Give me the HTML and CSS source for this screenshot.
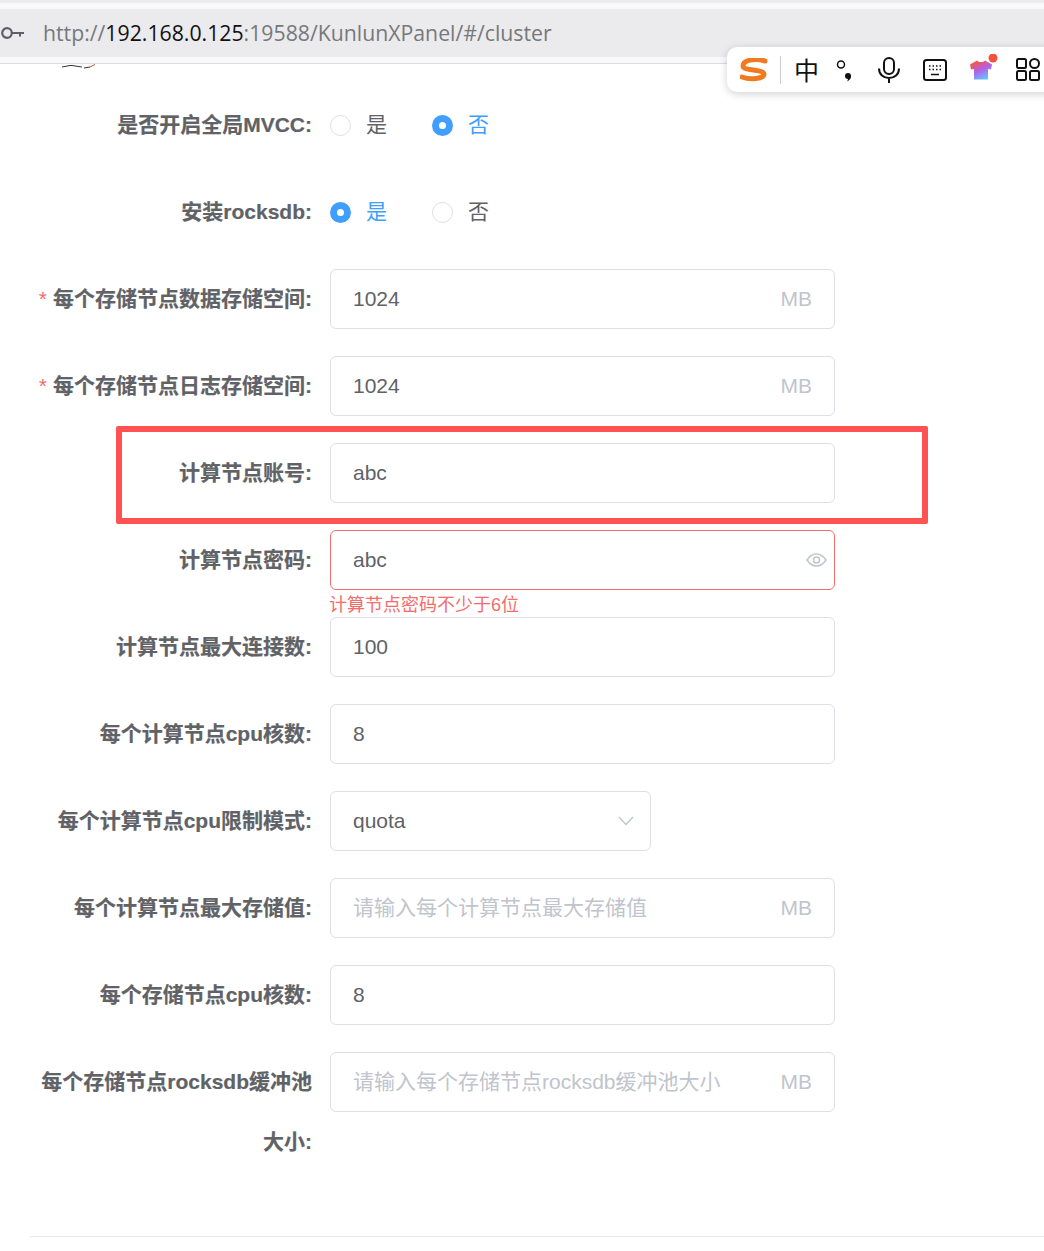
FILE: index.html
```html
<!DOCTYPE html>
<html lang="en">
<head>
    <meta charset="UTF-8">
    <title>KunlunXPanel</title>
    <link rel="stylesheet" href="styles.css">
</head>
<body>
    <div class="browser-bar">
        <div class="address">
            <svg class="key-icon" width="24" height="14" viewBox="0 0 24 14">
                <circle cx="7" cy="7" r="4.800" fill="none" stroke="#5f6063" stroke-width="2.200"/>
                <path d="M12 7H24M20 7V10.500" fill="none" stroke="#5f6063" stroke-width="2"/>
            </svg>
            <span class="url">http://<b>192.168.0.125</b>:19588/KunlunXPanel/#/cluster</span>
        </div>
    </div>

    <div class="ime-bar">
        <svg class="ime-logo" width="28" height="24" viewBox="0 0 28 24">
            <path d="M25 3C15 0 3 2 3 8C3 13 23 11 24 16C24 21 10 22 2 19" fill="none" stroke="#f07a1f" stroke-width="5" stroke-linecap="round"/>
        </svg>
        <span class="ime-divider"></span>
        <span class="ime-zh">中</span>
        <svg class="ime-punct" width="20" height="24" viewBox="0 0 20 24">
            <circle cx="5" cy="6.500" r="3.500" fill="none" stroke="#111" stroke-width="1.500"/>
            <circle cx="12" cy="18" r="3" fill="#111"/>
            <path d="M15 18C15 20.500 13.500 22.500 11 23.500C12 22 12 21 12 20Z" fill="#111"/>
        </svg>
        <svg class="ime-mic" width="22" height="26" viewBox="0 0 22 26">
            <rect x="6" y="1" width="10" height="16" rx="5" fill="none" stroke="#111" stroke-width="2"/>
            <path d="M1 11.500C1 17.500 5.500 21 11 21S21 17.500 21 11.500M11 21V26" fill="none" stroke="#111" stroke-width="2"/>
        </svg>
        <svg class="ime-keys" width="24" height="22" viewBox="0 0 24 22">
            <rect x="1" y="1" width="22" height="20" rx="2.500" fill="none" stroke="#111" stroke-width="2"/>
            <path d="M6 7h1.500M9.500 7h1.500M13 7h1.500M16.500 7h1.500M6 10.500h1.500M9.500 10.500h1.500M13 10.500h1.500M16.500 10.500h1.500M8 15.500h8" stroke="#111" stroke-width="1.500"/>
        </svg>
        <svg class="ime-skin" width="28" height="28" viewBox="0 0 28 28">
            <defs>
                <linearGradient id="skinFill" x1="0.200" y1="0" x2="0.700" y2="1">
                    <stop offset="0.100" stop-color="#f2594b"/>
                    <stop offset="0.500" stop-color="#b35fe8"/>
                    <stop offset="1" stop-color="#5fc8ff"/>
                </linearGradient>
            </defs>
            <path d="M0 10.500L7 6.500C9 8.500 13 8.500 15 6.500L22 10.500L21 15.500L18 15V25.500H4V15L1 15.500Z" fill="url(#skinFill)"/>
            <circle cx="23" cy="4" r="4.500" fill="#f4523f"/>
        </svg>
        <svg class="ime-grid" width="24" height="23" viewBox="0 0 24 23">
            <rect x="1" y="1" width="9" height="9" rx="1.500" fill="none" stroke="#111" stroke-width="2"/>
            <circle cx="18.500" cy="5.500" r="4.500" fill="none" stroke="#111" stroke-width="2"/>
            <rect x="1" y="13" width="9" height="9" rx="1.500" fill="none" stroke="#111" stroke-width="2"/>
            <rect x="14" y="13" width="9" height="9" rx="1.500" fill="none" stroke="#111" stroke-width="2"/>
        </svg>
    </div>

    <div class="page">
        <svg class="logo-scrap" width="36" height="6" viewBox="0 0 36 6">
            <path d="M2 3L10 1.500L12 1.500L22 3" fill="none" stroke="#333" stroke-width="1"/>
            <path d="M24 4L30 3" fill="none" stroke="#333" stroke-width="1"/>
            <path d="M30 3L35 .5" fill="none" stroke="#b5552a" stroke-width="1"/>
        </svg>

        <form class="cluster-form">
            <div class="form-row">
                <label class="form-label">是否开启全局MVCC:</label>
                <div class="radio-group">
                    <span class="radio"><i class="radio-dot"></i>是</span>
                    <span class="radio checked"><i class="radio-dot"></i>否</span>
                </div>
            </div>
            <div class="form-row">
                <label class="form-label">安装rocksdb:</label>
                <div class="radio-group">
                    <span class="radio checked"><i class="radio-dot"></i>是</span>
                    <span class="radio"><i class="radio-dot"></i>否</span>
                </div>
            </div>
            <div class="form-row">
                <label class="form-label required">每个存储节点数据存储空间:</label>
                <div class="input-box"><input type="text" value="1024"><span class="suffix">MB</span></div>
            </div>
            <div class="form-row">
                <label class="form-label required">每个存储节点日志存储空间:</label>
                <div class="input-box"><input type="text" value="1024"><span class="suffix">MB</span></div>
            </div>
            <div class="form-row">
                <label class="form-label">计算节点账号:</label>
                <div class="input-box"><input type="text" value="abc"></div>
            </div>
            <div class="form-row">
                <label class="form-label">计算节点密码:</label>
                <div class="input-box is-error">
                    <input type="text" value="abc">
                    <svg class="eye" width="21" height="14" viewBox="0 0 21 14">
                        <path d="M1 7C4 2.500 7 1 10.500 1S17 2.500 20 7C17 11.500 14 13 10.500 13S4 11.500 1 7Z" fill="none" stroke="#c0c4cc" stroke-width="1.500"/>
                        <circle cx="10.500" cy="7" r="3" fill="none" stroke="#c0c4cc" stroke-width="1.500"/>
                    </svg>
                    <div class="error-msg">计算节点密码不少于6位</div>
                </div>
            </div>
            <div class="form-row">
                <label class="form-label">计算节点最大连接数:</label>
                <div class="input-box"><input type="text" value="100"></div>
            </div>
            <div class="form-row">
                <label class="form-label">每个计算节点cpu核数:</label>
                <div class="input-box"><input type="text" value="8"></div>
            </div>
            <div class="form-row">
                <label class="form-label">每个计算节点cpu限制模式:</label>
                <div class="input-box select-box">
                    <input type="text" value="quota">
                    <svg class="arrow" width="16" height="10" viewBox="0 0 16 10">
                        <path d="M1 1L8 8.500L15 1" fill="none" stroke="#c0c4cc" stroke-width="1.300"/>
                    </svg>
                </div>
            </div>
            <div class="form-row">
                <label class="form-label">每个计算节点最大存储值:</label>
                <div class="input-box"><input type="text" placeholder="请输入每个计算节点最大存储值"><span class="suffix">MB</span></div>
            </div>
            <div class="form-row">
                <label class="form-label">每个存储节点cpu核数:</label>
                <div class="input-box"><input type="text" value="8"></div>
            </div>
            <div class="form-row">
                <label class="form-label">每个存储节点rocksdb缓冲池大小:</label>
                <div class="input-box"><input type="text" placeholder="请输入每个存储节点rocksdb缓冲池大小"><span class="suffix">MB</span></div>
            </div>
        </form>
        <div class="form-footer"></div>

        <div class="highlight"></div>
    </div>
</body>
</html>
```

FILE: styles.css
```css
html, body {
    margin: 0;
    padding: 0;
    background: #fff;
}

body {
    position: relative;
    height: 1251px;
    overflow: hidden;
    font-family: "Liberation Sans", "Noto Sans CJK SC", sans-serif;
    font-size: 21px;
    color: #606266;
}

.browser-bar {
    padding: 6px 0;
    background: #f9f9fb;
    border-top: 3px solid #ececee;
    border-bottom: 1px solid #dcdcde;
}

.address {
    display: flex;
    align-items: center;
    height: 48px;
    background: #ebebed;
}

.key-icon {
    margin-right: 19px;
}

.url {
    font-family: "Open Sans", "Noto Sans", sans-serif;
    font-size: 21.250px;
    color: #77787b;
    white-space: nowrap;
    margin-top: -2px;
}

.url b {
    font-weight: 400;
    color: #111;
}

/* input method toolbar floating over the browser */
.ime-bar {
    position: absolute;
    left: 727px;
    top: 47px;
    width: 340px;
    height: 45px;
    display: flex;
    align-items: center;
    background: #fff;
    border-radius: 10px;
    box-shadow: 0 2px 8px rgba(0, 0, 0, 0.18);
}

.ime-logo {
    margin-left: 13px;
}

.ime-divider {
    width: 1px;
    height: 28px;
    background: #ccc;
    margin-left: 12px;
}

.ime-zh {
    font-size: 25px;
    color: #111;
    margin-left: 13px;
    width: 25px;
    margin-top: -2px;
}

.ime-punct {
    margin-left: 17px;
}

.ime-mic {
    margin-left: 22px;
}

.ime-keys {
    margin-left: 23px;
}

.ime-skin {
    margin-left: 23px;
    margin-top: -4px;
}

.ime-grid {
    margin-left: 18px;
}

.page {
    padding-left: 30px;
}

.logo-scrap {
    display: block;
    margin-left: 30px;
}

.cluster-form {
    padding-top: 25px;
}

.form-row {
    display: flex;
    margin-bottom: 27px;
    line-height: 60px;
}

.form-label {
    width: 282px;
    padding-right: 18px;
    text-align: right;
    font-weight: 700;
    color: #606266;
    flex-shrink: 0;
    -webkit-text-stroke: 0.2px #606266;
}

.form-label.required::before {
    content: "*";
    color: #f56c6c;
    margin-right: 6px;
    font-weight: 400;
    -webkit-text-stroke: 0;
}

.radio-group {
    display: flex;
    align-items: center;
    height: 60px;
}

.radio {
    display: flex;
    align-items: center;
    width: 102px;
    color: #606266;
}

.radio-dot {
    box-sizing: border-box;
    width: 21px;
    height: 21px;
    border: 1px solid #dcdfe6;
    border-radius: 50%;
    margin-right: 15px;
    background: #fff;
}

.radio.checked {
    color: #409eff;
}

.radio.checked .radio-dot {
    border: 7px solid #409eff;
}

.input-box {
    position: relative;
    box-sizing: border-box;
    display: flex;
    align-items: center;
    width: 505px;
    height: 60px;
    border: 1px solid #dcdfe6;
    border-radius: 6px;
    background: #fff;
}

.input-box input {
    flex: 1;
    min-width: 0;
    border: none;
    outline: none;
    padding: 0 0 0 22px;
    height: 56px;
    font-family: inherit;
    font-size: 21px;
    color: #606266;
    background: transparent;
}

.input-box input::placeholder {
    color: #c0c4cc;
    opacity: 1;
}

.suffix {
    color: #c0c4cc;
    margin-right: 22px;
    margin-left: 8px;
}

.select-box {
    width: 321px;
}

.arrow {
    margin-right: 16px;
}

.eye {
    margin-right: 7px;
}

.input-box.is-error {
    border-color: #f56c6c;
}

.error-msg {
    position: absolute;
    left: -2px;
    top: 100%;
    padding-top: 5px;
    font-size: 18px;
    line-height: 22px;
    color: #f56c6c;
    white-space: nowrap;
}

.form-footer {
    position: absolute;
    left: 30px;
    right: 0;
    top: 1236px;
    height: 1px;
    background: #e4e7ed;
}

/* red annotation box drawn over the form */
.highlight {
    position: absolute;
    left: 116px;
    top: 426px;
    width: 812px;
    height: 98px;
    box-sizing: border-box;
    border: 6px solid #ff5252;
    border-radius: 2px;
}
```
